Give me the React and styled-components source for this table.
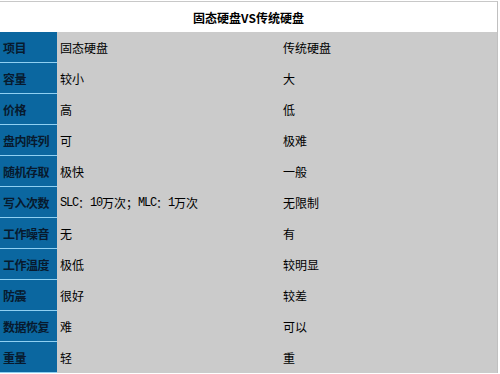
import React from 'react';
import styled, { createGlobalStyle } from 'styled-components';

const GlobalStyle = createGlobalStyle`
  body {
    margin: 0;
    background: #fff;
    font-family: "Noto Sans CJK SC", "Liberation Sans", sans-serif;
    font-size: 12px;
  }
`;

const Page = styled.div`
  padding-top: 1px;
  width: 498px;
`;

const Table = styled.div`
  display: grid;
  grid-template-columns: 57px 223px 1fr;
  background: #cbcbcb;
  border-top: 1px solid #c8c8c8;
  border-right: 1px solid #c0c0c0;
`;

const Header = styled.div`
  grid-column: 1 / -1;
  height: 30px;
  background: #fff;
  display: flex;
  align-items: center;
  justify-content: center;
  font-weight: bold;
  color: #000;
`;

const Label = styled.div`
  height: 30px;
  background: #0b67a0;
  border-bottom: 1px solid #8fd0f2;
  display: flex;
  align-items: center;
  padding-left: 3px;
  font-weight: bold;
  color: #071a2e;
  white-space: nowrap;
  letter-spacing: -0.5px;
`;

const Cell = styled.div`
  height: 31px;
  display: flex;
  align-items: center;
  padding-left: 3px;
  color: #000;
  white-space: nowrap;
`;

// latin runs in the old bitmap font are half-width, 6px per glyph
const Latin = styled.span`
  font-family: "Liberation Mono", monospace;
  letter-spacing: -1.2px;
`;

const rows = [
  ['项目', '固态硬盘', '传统硬盘'],
  ['容量', '较小', '大'],
  ['价格', '高', '低'],
  ['盘内阵列', '可', '极难'],
  ['随机存取', '极快', '一般'],
  ['写入次数', <><Latin>SLC</Latin>：<Latin>10</Latin>万次；<Latin>MLC</Latin>：<Latin>1</Latin>万次</>, '无限制'],
  ['工作噪音', '无', '有'],
  ['工作温度', '极低', '较明显'],
  ['防震', '很好', '较差'],
  ['数据恢复', '难', '可以'],
  ['重量', '轻', '重'],
];

export default function App() {
  return (
    <>
      <GlobalStyle />
      <Page>
        <Table>
          <Header>固态硬盘VS传统硬盘</Header>
          {rows.map(([label, a, b]) => (
            <React.Fragment key={label}>
              <Label>{label}</Label>
              <Cell>{a}</Cell>
              <Cell>{b}</Cell>
            </React.Fragment>
          ))}
        </Table>
      </Page>
    </>
  );
}
